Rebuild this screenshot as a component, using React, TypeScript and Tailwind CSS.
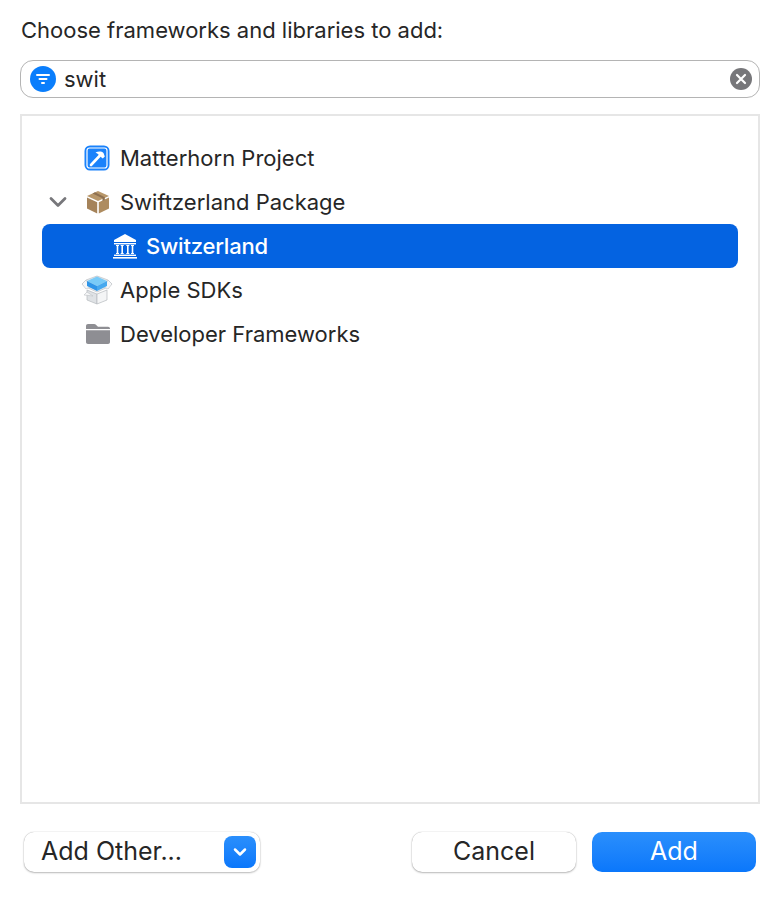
import { ChevronDown } from 'lucide-react';

function HammerIcon() {
  return (
    <svg width="26" height="26" viewBox="0 0 26 26">
      <rect x="0.5" y="0.5" width="25" height="25" rx="5.5" fill="#1a82fb" />
      <rect x="3" y="3" width="20" height="20" rx="2.5" fill="#1a82fb" stroke="#fff" strokeWidth="1.2" />
      <path d="M7 20 L15.5 11" stroke="#fff" strokeWidth="2.6" strokeLinecap="round" />
      <path d="M11.5 7.5 C14.5 6.2 17.5 6.2 19.5 8 L20.8 11.5 L18.8 13.5 L15.5 11 L14 9 Z" fill="#fff" />
    </svg>
  );
}

function PackageIcon() {
  return (
    <svg className="ml-[2px]" width="24" height="24" viewBox="0 0 24 24">
      <path d="M12 1 L23 6 L12 11 L1 6 Z" fill="#b8976a" />
      <path d="M1 7.5 L11.2 12.2 V23.5 L1 18.6 Z" fill="#a5835a" />
      <path d="M23 7.5 L12.8 12.2 V23.5 L23 18.6 Z" fill="#ae8c60" />
      <path d="M6.5 3.4 L16.5 8.2 V11 L18.8 10 V7.2 L9 2.3 Z" fill="#8e7050" />
    </svg>
  );
}

function BankIcon() {
  return (
    <svg className="ml-[3px]" width="24" height="26" viewBox="0 0 24 26" fill="#fff">
      <path d="M12 1 L23 7 V9 H1 V7 Z" />
      <rect x="1" y="10" width="22" height="1.4" />
      <path d="M3 12 H6 V13 H5.3 V20 H6 V21 H3 V20 H3.7 V13 H3 Z" />
      <path d="M7.7 12 H10.7 V13 H10 V20 H10.7 V21 H7.7 V20 H8.4 V13 H7.7 Z" />
      <path d="M13.3 12 H16.3 V13 H15.6 V20 H16.3 V21 H13.3 V20 H14 V13 H13.3 Z" />
      <path d="M18 12 H21 V13 H20.3 V20 H21 V21 H18 V20 H18.7 V13 H18 Z" />
      <rect x="1" y="21.6" width="22" height="1.4" />
      <rect x="0" y="24" width="24" height="1.6" />
    </svg>
  );
}

function SdkIcon() {
  return (
    <svg width="32" height="30" viewBox="0 0 32 30">
      <path d="M5 12 L16 17 L27 12 L31 9 L27 5 L16 1 L5 5 L1 9 Z" fill="#e9ebee" stroke="#bcc0c4" strokeWidth="0.7" />
      <path d="M1 9 L5 5 L9 12 L5 14 Z" fill="#f6f7f8" stroke="#bcc0c4" strokeWidth="0.6" />
      <path d="M31 9 L27 5 L23 12 L27 14 Z" fill="#f6f7f8" stroke="#bcc0c4" strokeWidth="0.6" />
      <path d="M6 15 L16 19 V29 L6 25 Z" fill="#dfe2e5" stroke="#b5b9bd" strokeWidth="0.7" />
      <path d="M26 15 L16 19 V29 L26 25 Z" fill="#f4f5f6" stroke="#b5b9bd" strokeWidth="0.7" />
      <path d="M6 17 L12 21 L3 20 Z" fill="#f6f7f8" stroke="#bcc0c4" strokeWidth="0.6" />
      <path d="M16 1.5 L26 6 L16 11 L6 6 Z" fill="#79cbf8" />
      <path d="M6 6 L16 11 V16 L6 11 Z" fill="#2f95e8" />
      <path d="M26 6 L16 11 V16 L26 11 Z" fill="#47a9ef" />
    </svg>
  );
}

function FolderIcon() {
  return (
    <svg className="ml-[2px]" width="26" height="22" viewBox="0 0 26 22" fill="#8e8e93">
      <path d="M1 5 V3 C1 1.8 1.8 1 3 1 H9 C10 1 10.6 1.4 11.2 2 L12.4 3.2 C12.8 3.6 13.2 3.8 14 3.8 H23 C24.2 3.8 25 4.6 25 5.8 V6 H1 Z" />
      <path d="M1 7.2 H25 V19 C25 20.2 24.2 21 23 21 H3 C1.8 21 1 20.2 1 19 Z" />
    </svg>
  );
}

function TreeRow({ icon, label, indent, chevron, selected }: { icon: React.ReactNode; label: string; indent: string; chevron?: boolean; selected?: boolean }) {
  return (
    <div className={`relative flex h-11 items-center rounded-lg ${indent} ${selected ? 'bg-[#0463e1] text-white' : 'text-[#262626]'}`}>
      {chevron && <ChevronDown className="absolute left-[2px] top-[8px] text-[#77777b]" size={28} strokeWidth={2.4} />}
      <div className="flex w-[38px] shrink-0 justify-center">{icon}</div>
      <span className={`ml-1 ${selected ? 'font-medium tracking-[-0.2px]' : ''}`}>{label}</span>
    </div>
  );
}

export default function App() {
  return (
    <div className="flex h-[898px] w-[776px] flex-col bg-white pl-5 pr-4 font-['Inter',sans-serif] text-[22px] leading-7 text-[#262626]">
      <div className="mt-4 h-7 pl-px">Choose frameworks and libraries to add:</div>

      {/* search field */}
      <div className="mt-[16px] flex h-[38px] items-center rounded-[13px] border border-[#b4b4b4] pl-[9px] pr-[7px]">
        <div className="flex h-[26px] w-[26px] items-center justify-center rounded-full bg-[#0a7efc]">
          <svg width="16" height="12" viewBox="0 0 16 12" fill="#fff">
            <rect x="1" y="1" width="14" height="2" rx="1" />
            <rect x="3.5" y="5" width="9" height="2" rx="1" />
            <rect x="6" y="9" width="4" height="2" rx="1" />
          </svg>
        </div>
        <span className="ml-2 flex-1">swit</span>
        <div className="flex h-[22px] w-[22px] items-center justify-center rounded-full bg-[#77777a]">
          <svg width="12" height="12" viewBox="0 0 12 12">
            <path d="M2 2 L10 10 M10 2 L2 10" stroke="#fff" strokeWidth="2.2" strokeLinecap="round" />
          </svg>
        </div>
      </div>

      {/* tree */}
      <div className="mt-4 h-[690px] border-2 border-[#e6e6e6] px-5 pt-5">
        <TreeRow indent="pl-[36px]" label="Matterhorn Project" icon={<HammerIcon />} />
        <TreeRow indent="pl-[36px]" label="Swiftzerland Package" icon={<PackageIcon />} chevron />
        <TreeRow indent="pl-[62px]" label="Switzerland" icon={<BankIcon />} selected />
        <TreeRow indent="pl-[36px]" label="Apple SDKs" icon={<SdkIcon />} />
        <TreeRow indent="pl-[36px]" label="Developer Frameworks" icon={<FolderIcon />} />
      </div>

      {/* footer */}
      <div className="mt-7 flex items-center px-1 text-[25px]">
        <div className="flex h-10 w-[236px] items-center justify-between rounded-[10px] bg-white pl-[17px] pr-1 shadow-[0_0_1px_rgba(0,0,0,0.35),0_1px_2px_rgba(0,0,0,0.25)]">
          <span className="pb-[2px]">Add Other...</span>
          <div className="flex h-8 w-8 items-center justify-center rounded-lg bg-gradient-to-b from-[#2a8ffc] to-[#0a77fb]">
            <ChevronDown className="text-white" size={20} strokeWidth={3} />
          </div>
        </div>
        <div className="ml-auto flex h-10 w-[164px] items-center justify-center rounded-[10px] bg-white pb-[2px] shadow-[0_0_1px_rgba(0,0,0,0.35),0_1px_2px_rgba(0,0,0,0.25)]">
          Cancel
        </div>
        <div className="ml-4 flex h-10 w-[164px] items-center justify-center rounded-[10px] bg-gradient-to-b from-[#2a8ffc] to-[#0a77fb] pb-[2px] text-white">
          Add
        </div>
      </div>
    </div>
  );
}
